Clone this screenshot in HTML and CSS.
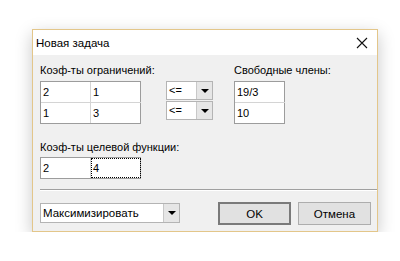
FILE: index.html
```html
<!DOCTYPE html>
<html lang="ru">
<head>
  <meta charset="UTF-8" />
  <title>Новая задача</title>
  <link rel="stylesheet" href="styles.css">
</head>
<body>

<div class="dialog">
  <div class="titlebar">
    <span class="title">Новая задача</span>
    <svg class="close" width="12" height="12" viewBox="0 0 12 12">
      <path d="M1 1 L11 11 M11 1 L1 11" stroke="#111" stroke-width="1.1" fill="none" />
    </svg>
  </div>

  <div class="client">
    <div class="top-row">
      <div class="group coefs">
        <div class="label">Коэф-ты ограничений:</div>
        <div class="grid cols-2">
          <div class="cell">2</div><div class="cell">1</div>
          <div class="cell">1</div><div class="cell">3</div>
        </div>
      </div>

      <div class="signs">
        <div class="combo small"><span class="val">&lt;=</span><span class="arrow"></span></div>
        <div class="combo small"><span class="val">&lt;=</span><span class="arrow"></span></div>
      </div>

      <div class="group free">
        <div class="label">Свободные члены:</div>
        <div class="grid cols-1">
          <div class="cell">19/3</div>
          <div class="cell">10</div>
        </div>
      </div>
    </div>

    <div class="group target">
      <div class="label">Коэф-ты целевой функции:</div>
      <div class="grid cols-2 one-row">
        <div class="cell">2</div><div class="cell focus">4</div>
      </div>
    </div>

    <div class="separator"></div>

    <div class="bottom-row">
      <div class="combo wide"><span class="val">Максимизировать</span><span class="arrow"></span></div>
      <div class="buttons">
        <button class="btn default">OK</button>
        <button class="btn">Отмена</button>
      </div>
    </div>
  </div>
</div>

</body>
</html>
```

FILE: styles.css
```css
* {
  box-sizing: border-box;
}

html, body {
  margin: 0;
  padding: 0;
  background: #fff;
  font-family: 'Liberation Sans', Arial, sans-serif;
  font-size: 11px;
  color: #000;
}

body {
  padding: 29px 0 0 32px;
}

.dialog {
  width: 346px;
  height: 203px;
  border: 1px solid #e3c68a;
  background: #f0f0f0;
  box-shadow: 0 5px 16px rgba(0, 0, 0, 0.22);
}

.titlebar {
  height: 25px;
  background: #fff;
  display: flex;
  align-items: center;
  justify-content: space-between;
  padding: 0 9px 0 3px;
}

.title {
  font-size: 11.5px;
}

.client {
  padding: 8px 0 0 7px;
}

.top-row {
  display: flex;
  align-items: flex-start;
}

.coefs {
  width: 101px;
}

.label {
  height: 14px;
  line-height: 14px;
  margin-bottom: 4px;
  white-space: nowrap;
}

.grid {
  display: grid;
  background: #fff;
  border: 1px solid #9c9c9c;
}

.cols-2 {
  grid-template-columns: 50px 50px;
  width: 101px;
}

.cols-1 {
  grid-template-columns: 50px;
  width: 51px;
}

.cell {
  height: 21px;
  line-height: 20px;
  padding-left: 2px;
  border-right: 1px solid #d4d4d4;
  border-bottom: 1px solid #d4d4d4;
}

.cols-2 .cell:nth-child(2n),
.cols-1 .cell {
  border-right: none;
}

.cols-2 .cell:nth-last-child(-n+2),
.cols-1 .cell:last-child {
  border-bottom: none;
  height: 20px;
}

.cell.focus {
  outline: 1px dotted #000;
  outline-offset: -1px;
}

.signs {
  margin: 18px 0 0 25px;
  display: flex;
  flex-direction: column;
  gap: 1px;
}

.free {
  margin-left: 21px;
}

.target {
  margin-top: 16px;
}

.target .label {
  margin-bottom: 3px;
}

.combo {
  display: flex;
  background: #fff;
  border: 1px solid #b4b4b4;
}

.combo .val {
  flex: 1;
  padding-left: 2px;
  white-space: nowrap;
}

.combo .arrow {
  width: 16px;
  background: #e6e6e6;
  border-left: 1px solid #c8c8c8;
  display: flex;
  align-items: center;
  justify-content: center;
}

.combo .arrow::after {
  content: "";
  border-left: 4px solid transparent;
  border-right: 4px solid transparent;
  border-top: 4px solid #000;
}

.combo.small {
  width: 47px;
  height: 19px;
  line-height: 17px;
}

.combo.wide {
  width: 140px;
  height: 20px;
  line-height: 18px;
  margin-top: 1px;
  font-size: 11.5px;
}

.separator {
  margin: 10px 0 0 0;
  height: 2px;
  border-top: 1px solid #a0a0a0;
  border-bottom: 1px solid #fff;
}

.bottom-row {
  display: flex;
  align-items: flex-start;
  justify-content: space-between;
  margin-top: 11px;
  padding-right: 6px;
}

.buttons {
  display: flex;
  gap: 7px;
}

.btn {
  font-family: inherit;
  font-size: 11.5px;
  width: 73px;
  height: 23px;
  background: #e1e1e1;
  border: 1px solid #adadad;
  color: #000;
  padding: 0;
}

.btn.default {
  border: 2px solid #7a7a7a;
}
```
